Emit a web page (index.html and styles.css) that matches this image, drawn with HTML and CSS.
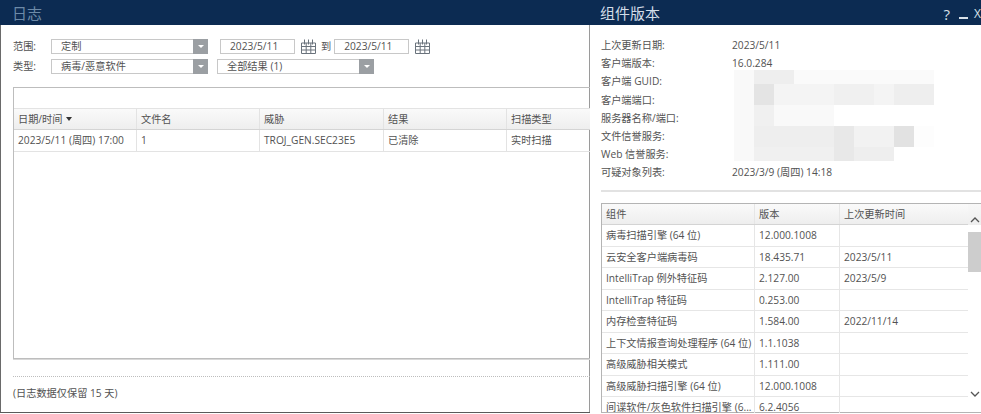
FILE: index.html
```html
<!DOCTYPE html>
<html lang="zh-CN">
<head>
<meta charset="utf-8">
<title>日志</title>
<link rel="stylesheet" href="styles.css">
</head>
<body>
<div class="page">
  <section class="log">
    <header class="bar"><h1 class="log-title">日志</h1></header>
    <div class="log-body">
      <div class="filters">
        <div class="filter-row">
          <span class="flabel">范围:</span>
          <div class="select s-range"><span>定制</span><i class="arrow"></i></div>
          <div class="date">2023/5/11</div>
          <svg class="cal" viewBox="0 0 15 15"><path d="M.5 4h14v10.500H.5zM.5 7.500h14M.5 11h14M5.200 4v10.500M9.800 4v10.500M3.500.500v5M7.500.500v5M11.500.500v5" fill="none" stroke="#6a737c" stroke-width="1"/></svg>
          <span class="to">到</span>
          <div class="date">2023/5/11</div>
          <svg class="cal" viewBox="0 0 15 15"><path d="M.5 4h14v10.500H.5zM.5 7.500h14M.5 11h14M5.200 4v10.500M9.800 4v10.500M3.500.500v5M7.500.500v5M11.500.500v5" fill="none" stroke="#6a737c" stroke-width="1"/></svg>
        </div>
        <div class="filter-row">
          <span class="flabel">类型:</span>
          <div class="select s-range"><span>病毒/恶意软件</span><i class="arrow"></i></div>
          <div class="select s-result"><span>全部结果 (1)</span><i class="arrow"></i></div>
        </div>
      </div>
      <div class="log-table">
        <div class="toolbar"></div>
        <div class="lrow lhead">
          <div>日期/时间 <i class="sort"></i></div><div>文件名</div><div>威胁</div><div>结果</div><div>扫描类型</div>
        </div>
        <div class="lrow">
          <div>2023/5/11 (周四) 17:00</div><div>1</div><div>TROJ_GEN.SEC23E5</div><div>已清除</div><div>实时扫描</div>
        </div>
      </div>
      <div class="log-foot">(日志数据仅保留 15 天)</div>
    </div>
  </section>
  <section class="comp">
    <header class="bar comp-bar">
      <h2 class="comp-title">组件版本</h2>
      <div class="win-btns"><span class="help">?</span><span class="min"></span><span class="close">X</span></div>
    </header>
    <div class="comp-body">
      <dl class="info">
        <dt>上次更新日期:</dt><dd>2023/5/11</dd>
        <dt>客户端版本:</dt><dd>16.0.284</dd>
        <dt>客户端 GUID:</dt><dd></dd>
        <dt>客户端端口:</dt><dd></dd>
        <dt>服务器名称/端口:</dt><dd></dd>
        <dt>文件信誉服务:</dt><dd></dd>
        <dt>Web 信誉服务:</dt><dd></dd>
        <dt>可疑对象列表:</dt><dd>2023/3/9 (周四) 14:18</dd>
      </dl>
      <svg class="mosaic" viewBox="0 0 200 91" shape-rendering="crispEdges" aria-hidden="true">
        <rect x="0" y="0" width="200" height="91" fill="#f9f9f9"/>
        <rect x="20" y="0" width="40" height="14" fill="#eeeeee"/>
        <rect x="60" y="0" width="140" height="14" fill="#fafafa"/>
        <rect x="20" y="14" width="20" height="21" fill="#e4e4e4"/>
        <rect x="40" y="14" width="160" height="21" fill="#f4f4f4"/>
        <rect x="100" y="14" width="40" height="21" fill="#f0f0f0"/>
        <rect x="160" y="14" width="40" height="21" fill="#eeeeee"/>
        <rect x="20" y="35" width="20" height="21" fill="#f0f0f0"/>
        <rect x="100" y="35" width="100" height="21" fill="#ffffff"/>
        <rect x="20" y="56" width="160" height="21" fill="#eeeeee"/>
        <rect x="100" y="56" width="20" height="35" fill="#e8e8e8"/>
        <rect x="120" y="56" width="40" height="21" fill="#f2f2f2"/>
        <rect x="160" y="56" width="20" height="21" fill="#e2e2e2"/>
        <rect x="180" y="56" width="20" height="35" fill="#fdfdfd"/>
        <rect x="20" y="77" width="80" height="14" fill="#f0f0f0"/>
        <rect x="120" y="77" width="40" height="14" fill="#eeeeee"/>
        <rect x="160" y="77" width="40" height="14" fill="#ffffff"/>
      </svg>
      <div class="rule"></div>
      <div class="ctable">
        <div class="cgrid">
          <div class="crow chead"><div>组件</div><div>版本</div><div>上次更新时间</div></div>
          <div class="crow"><div>病毒扫描引擎 (64 位)</div><div>12.000.1008</div><div></div></div>
          <div class="crow"><div>云安全客户端病毒码</div><div>18.435.71</div><div>2023/5/11</div></div>
          <div class="crow"><div>IntelliTrap 例外特征码</div><div>2.127.00</div><div>2023/5/9</div></div>
          <div class="crow"><div>IntelliTrap 特征码</div><div>0.253.00</div><div></div></div>
          <div class="crow"><div>内存检查特征码</div><div>1.584.00</div><div>2022/11/14</div></div>
          <div class="crow"><div>上下文情报查询处理程序 (64 位)</div><div>1.1.1038</div><div></div></div>
          <div class="crow"><div>高级威胁相关模式</div><div>1.111.00</div><div></div></div>
          <div class="crow"><div>高级威胁扫描引擎 (64 位)</div><div>12.000.1008</div><div></div></div>
          <div class="crow last"><div>间谍软件/灰色软件扫描引擎 (6...</div><div>6.2.4056</div><div></div></div>
        </div>
        <div class="scroll">
          <svg class="chev" viewBox="0 0 10 6"><path d="M1 5l4-4 4 4" fill="none" stroke="#555" stroke-width="1.300"/></svg>
          <div class="thumb"></div>
          <svg class="chev chev-down" viewBox="0 0 10 6"><path d="M1 1l4 4 4-4" fill="none" stroke="#555" stroke-width="1.300"/></svg>
        </div>
      </div>
    </div>
  </section>
</div>
</body>
</html>
```

FILE: styles.css
```css
* { box-sizing: border-box; }
html, body { margin: 0; padding: 0; }
body {
  width: 981px;
  height: 414px;
  overflow: hidden;
  background: #fff;
  color: #525252;
  font: 10.2px/1.2 "Open Sans", "Noto Sans CJK SC", sans-serif;
}
.page { display: flex; width: 981px; height: 414px; }
.bar { height: 25px; background: #0c2b52; display: flex; align-items: center; }
h1, h2 { margin: 0; font-weight: 400; }

/* left window */
.log {
  width: 590px;
  height: 413px;
  display: flex;
  flex-direction: column;
  border-bottom: 1px solid #5a5a5a;
}
.log-title { margin-left: 12px; font-size: 15px; color: #6d8aa8; }
.log-body {
  flex: 1;
  display: flex;
  flex-direction: column;
  padding: 14px 0 0 12px;
  border-left: 1px solid #6a6a6a;
  border-right: 1px solid #9a9a9a;
}
.filters { display: flex; flex-direction: column; gap: 5px; }
.filter-row { display: flex; align-items: center; height: 15px; }
.flabel { width: 38px; flex: none; }
.select {
  height: 15px;
  display: flex;
  align-items: center;
  justify-content: space-between;
  border: 1px solid #c8c8c8;
  padding-left: 9px;
}
.s-range { width: 157px; }
.s-result { width: 157px; margin-left: 9px; }
.arrow {
  width: 15px;
  height: 15px;
  margin-right: -1px;
  background: #9b9fa3;
  display: flex;
  align-items: center;
  justify-content: center;
}
.arrow::after {
  content: "";
  border: 3px solid transparent;
  border-top: 3px solid #fff;
  border-bottom: 0;
}
.date {
  width: 75px;
  height: 15px;
  margin-left: 12px;
  border: 1px solid #c8c8c8;
  padding-left: 9px;
  line-height: 13px;
}
.date ~ .date { margin-left: 3px; }
.cal { width: 15px; height: 15px; margin-left: 6px; flex: none; }
.to { margin-left: 5px; }
.log-table {
  width: 577px;
  height: 272px;
  margin-top: 13px;
  border: 1px solid #bdbdbd;
  border-right: 0;
  box-shadow: 0 1px 0 #d8d8d8;
}
.toolbar { height: 20px; }
.lrow {
  display: grid;
  grid-template-columns: 123px 123px 124px 123px 1fr;
  height: 22px;
  border-bottom: 1px solid #e3e3e3;
}
.lrow > div {
  display: flex;
  align-items: center;
  padding-left: 4px;
  border-right: 1px solid #e3e3e3;
  gap: 2px;
  white-space: nowrap;
}
.lrow > div:last-child { border-right: 0; }
.lhead {
  background: linear-gradient(#fafafa, #eeeeee);
  border-top: 1px solid #e3e3e3;
  border-bottom-color: #d4d4d4;
}
.sort {
  display: inline-block;
  border: 3px solid transparent;
  border-top: 4px solid #333;
  border-bottom: 0;
  margin-left: 1px;
}
.log-foot {
  width: 577px;
  margin-top: 17px;
  padding-top: 10px;
  border-top: 1px dotted #bdbdbd;
}

/* right window */
.comp { position: relative; flex: 1; min-width: 0; height: 414px; display: flex; flex-direction: column; }
.comp-bar { justify-content: space-between; padding-left: 10px; }
.comp-title { font-size: 15px; color: #d3dde8; }
.win-btns { display: flex; align-items: center; gap: 9px; color: #d8e0e8; flex: none; height: 25px; padding-top: 3px; line-height: 16px; }
.help { font-size: 15px; }
.min { width: 9px; height: 2px; background: #d8e0e8; margin-top: 7px; }
.close { font-size: 12px; margin-left: -3px; }
.comp-body { flex: 1; display: flex; flex-direction: column; padding: 11px 0 0 11px; min-height: 0; }
.info {
  margin: 0;
  display: grid;
  grid-template-columns: 131px 1fr;
  grid-auto-rows: 18.2px;
  align-items: center;
}
.info dt, .info dd { margin: 0; }
.mosaic { position: absolute; left: 144px; top: 70px; width: 200px; height: 91px; }
.rule { height: 2px; background: #e2e2e2; margin-top: 8px; }
.ctable {
  display: flex;
  height: 210px;
  margin-top: 11px;
  border: 1px solid #b4b4b4;
  border-right: 0;
}
.cgrid { flex: 1; min-width: 0; }
.crow {
  display: grid;
  grid-template-columns: 153px 85px 1fr;
  height: 21.500px;
  border-bottom: 1px solid #e6e6e6;
}
.crow > div {
  display: flex;
  align-items: center;
  padding-left: 4px;
  border-right: 1px solid #e6e6e6;
  white-space: nowrap;
}
.crow > div:last-child { border-right: 0; }
.last { height: 15.500px; border-bottom: 0; line-height: 12px; }
.last > div { align-items: flex-end; }
.chead { background: linear-gradient(#fafafa, #eeeeee); border-bottom-color: #d4d4d4; }
.scroll {
  width: 13px;
  flex: none;
  display: flex;
  flex-direction: column;
  align-items: center;
  padding-top: 13px;
  background: linear-gradient(#f8f8f8, #eeeeee) top / 100% 21px no-repeat #fff;
}
.chev { width: 10px; height: 6px; flex: none; }
.thumb { width: 13px; height: 40px; margin-top: 9px; background: #cdcdcd; flex: none; }
.chev-down { margin-top: 119px; }
```
